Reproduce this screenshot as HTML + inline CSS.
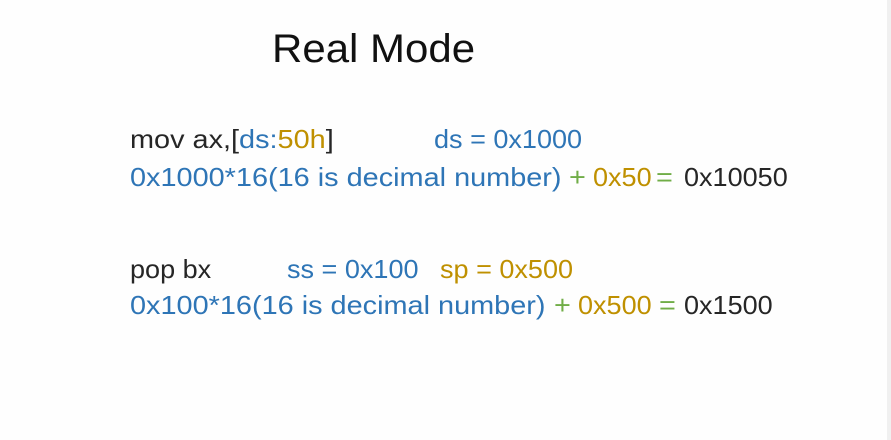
<!DOCTYPE html>
<html><head><meta charset="utf-8"><style>
html,body{margin:0;padding:0}
body{width:891px;height:440px;background:#fefefe;position:relative;overflow:hidden;font-family:"Liberation Sans",sans-serif}
.s{position:absolute;white-space:nowrap;font-size:26px;line-height:1;transform:scaleX(1.11);transform-origin:0 0}
.n{transform:scaleX(1.04)}
.k{color:#262626}.b{color:#2e75b6}.g{color:#bf9000}.gr{color:#70ad47}
.t{position:absolute;left:272px;top:29px;font-size:40px;color:#111;white-space:nowrap;line-height:1;transform:scaleX(1.05);transform-origin:0 0}
.edge{position:absolute;right:0;top:0;width:4px;height:440px;background:#f0f0f0}
</style></head><body>
<div class="t">Real Mode</div>
<div class="s" style="left:130px;top:126px"><span class="k">mov ax,[</span><span class="b">ds:</span><span class="g">50h</span><span class="k">]</span></div>
<div class="s n b" style="left:434px;top:126px">ds = 0x1000</div>
<div class="s" style="left:130px;top:164px"><span class="b">0x1000*16(16 is decimal number)</span></div>
<div class="s gr" style="left:569px;top:164px">+</div>
<div class="s n g" style="left:593px;top:164px">0x50</div>
<div class="s gr" style="left:656px;top:164px">=</div>
<div class="s n k" style="left:684px;top:164px">0x10050</div>
<div class="s n k" style="left:130px;top:256px">pop bx</div>
<div class="s n b" style="left:287px;top:256px">ss = 0x100</div>
<div class="s n g" style="left:440px;top:256px">sp = 0x500</div>
<div class="s b" style="left:130px;top:292px">0x100*16(16 is decimal number)</div>
<div class="s gr" style="left:554px;top:292px">+</div>
<div class="s n g" style="left:578px;top:292px">0x500</div>
<div class="s gr" style="left:659px;top:292px">=</div>
<div class="s n k" style="left:684px;top:292px">0x1500</div>
<div class="edge"></div>
</body></html>
